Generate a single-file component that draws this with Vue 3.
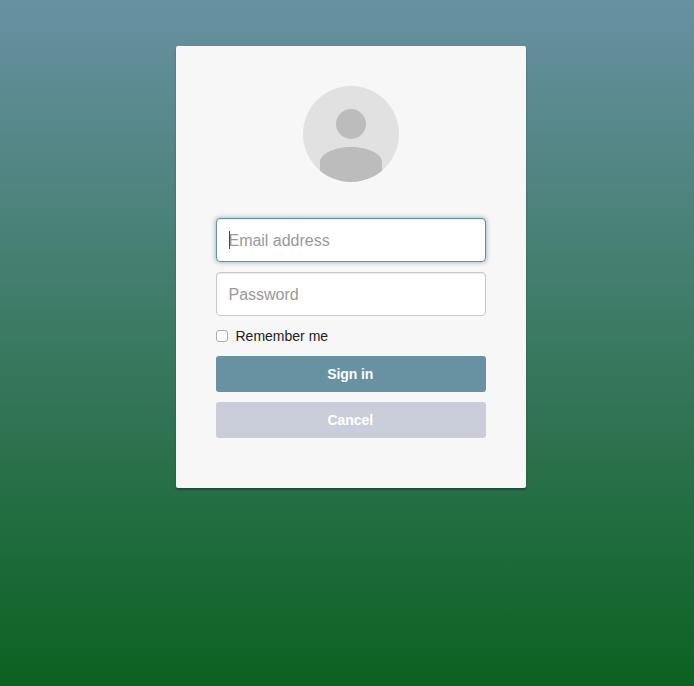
<script setup>
import { ref } from 'vue'

const email = ref('')
const password = ref('')
const remember = ref(false)
</script>

<template>
  <main class="page">
    <section class="card">
      <svg class="avatar" viewBox="0 0 96 96" aria-hidden="true">
        <clipPath id="disc"><circle cx="48" cy="48" r="48" /></clipPath>
        <g clip-path="url(#disc)">
          <rect width="96" height="96" fill="#e1e1e1" />
          <circle cx="48" cy="38" r="15" fill="#bcbcbc" />
          <path d="M17 96V76C17 68 31 61 48 61S79 68 79 76V96Z" fill="#bcbcbc" />
        </g>
      </svg>
      <form class="form" @submit.prevent>
        <div class="field">
          <input v-model="email" class="input focused" type="text" placeholder="Email address" />
          <span v-if="!email" class="caret"></span>
        </div>
        <input v-model="password" class="input" type="password" placeholder="Password" />
        <label class="remember">
          <input v-model="remember" class="check" type="checkbox" />
          <span class="label">Remember me</span>
        </label>
        <button class="btn primary" type="submit">Sign in</button>
        <button class="btn cancel" type="button">Cancel</button>
      </form>
    </section>
  </main>
</template>

<style>
body {
  margin: 0;
}
</style>

<style scoped>
.page {
  box-sizing: border-box;
  min-height: 100vh;
  padding: 46px 168px 0 176px;
  background: linear-gradient(rgb(104, 145, 162), rgb(12, 97, 33));
  font-family: "Liberation Sans", Arial, sans-serif;
}
.card {
  box-sizing: border-box;
  width: 350px;
  height: 442px;
  padding: 40px;
  display: flex;
  flex-direction: column;
  align-items: center;
  background: #f7f7f7;
  border-radius: 2px;
  box-shadow: 0 2px 2px rgba(0, 0, 0, 0.3);
}
.avatar {
  width: 96px;
  height: 96px;
  flex: none;
}
.form {
  width: 100%;
  margin-top: 36px;
  display: flex;
  flex-direction: column;
}
.field {
  position: relative;
  display: flex;
}
.input {
  box-sizing: border-box;
  width: 100%;
  height: 44px;
  margin: 0 0 10px;
  padding: 8px 12px 6px 11.5px;
  border: 1px solid #c8c8c8;
  border-radius: 4px;
  outline: 0;
  background: #fff;
  color: #333;
  font: 16px "Liberation Sans", Arial, sans-serif;
  letter-spacing: -0.02px;
  box-shadow: inset 0 1px 1px rgba(0, 0, 0, 0.075);
}
.input::placeholder {
  color: #999;
  opacity: 1;
}
.input.focused {
  border-color: rgb(104, 145, 162);
  box-shadow: inset 0 1px 1px rgba(0, 0, 0, 0.075), 0 0 5px rgba(104, 145, 162, 0.8);
}
.caret {
  position: absolute;
  left: 13px;
  top: 13px;
  width: 1px;
  height: 18px;
  background: #444;
}
.remember {
  height: 20px;
  margin-bottom: 10px;
  display: flex;
  align-items: center;
  gap: 7.5px;
  font-size: 14px;
  line-height: 20px;
  color: #222;
}
.check {
  appearance: none;
  box-sizing: border-box;
  width: 12px;
  height: 12px;
  margin: 0;
  border: 1px solid #aaa;
  border-radius: 3px;
  background: #fff;
}
.btn {
  height: 36px;
  margin: 0 0 10px;
  padding: 0 1.5px 0 0;
  border: 0;
  border-radius: 3px;
  color: #fff;
  font: bold 14px "Liberation Sans", Arial, sans-serif;
  letter-spacing: -0.08px;
}
.primary {
  background: rgb(104, 145, 162);
}
.cancel {
  background: #cacdda;
}
</style>
